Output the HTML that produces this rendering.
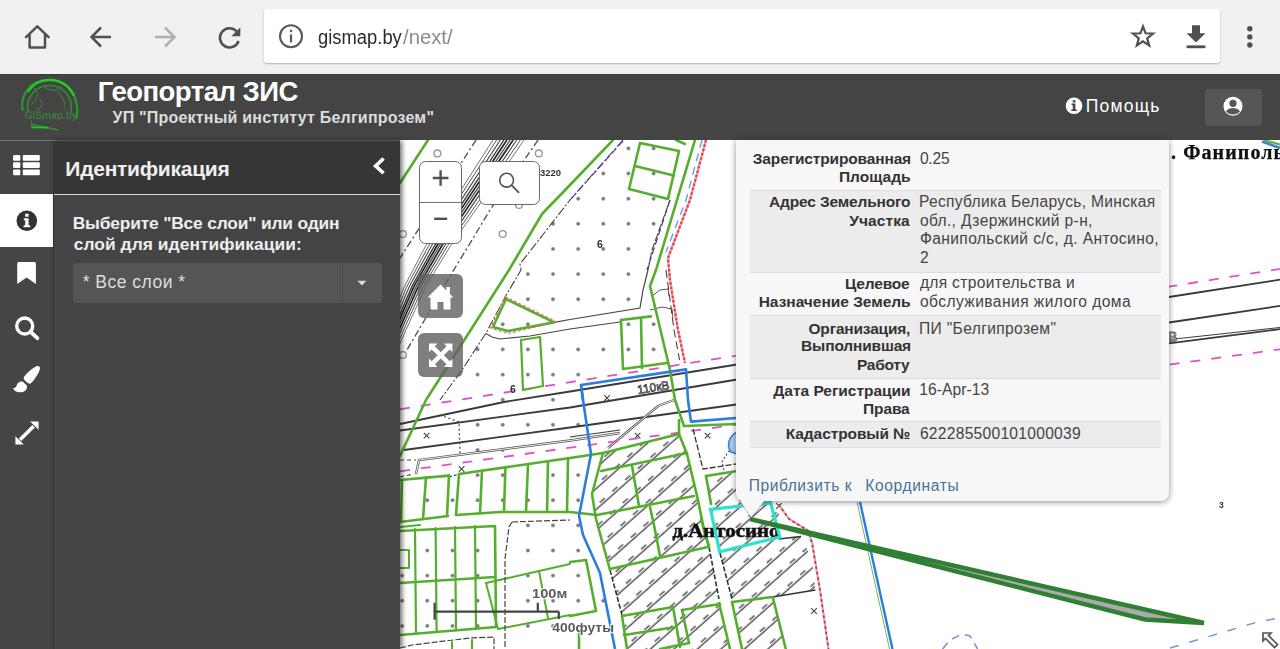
<!DOCTYPE html>
<html lang="ru">
<head>
<meta charset="utf-8">
<title>Геопортал ЗИС</title>
<style>
*{box-sizing:border-box;margin:0;padding:0}
html,body{width:1280px;height:649px;overflow:hidden;background:#fff;font-family:"Liberation Sans",sans-serif;}
div,svg{position:absolute}
#chrome{left:0;top:0;width:1280px;height:74px;background:#f1f1f1}
#omni{left:264px;top:9px;width:956px;height:53.6px;background:#fff;border-radius:3px;box-shadow:0 1px 2px rgba(0,0,0,.28)}
#url{left:317px;top:24px;font-size:20.5px;line-height:26px;color:#2a2a2a;white-space:nowrap;letter-spacing:-0.55px}
#url span{color:#8a8a8a}
#hdr{left:0;top:74px;width:1280px;height:67px;background:#444;border-top:1px solid #3a3a3a}
#hline{left:0;top:140px;width:400px;height:1px;background:#777}
#t1{left:98px;top:74.5px;font-size:27.5px;line-height:34px;font-weight:bold;color:#fff;white-space:nowrap;letter-spacing:-0.55px}
#t2{left:112px;top:109px;font-size:16px;line-height:18px;font-weight:bold;color:#ddd;white-space:nowrap;letter-spacing:.19px}
#help{left:1086px;top:95px;font-size:17.5px;line-height:22px;color:#fff;white-space:nowrap;letter-spacing:.8px}
#userbtn{left:1205px;top:89px;width:57px;height:37px;background:#565656;border-radius:3px}
#strip{left:0;top:141px;width:54px;height:508px;background:#454545;border-right:1px solid #3a3a3a}
#active{left:0;top:194px;width:53px;height:53px;background:#fff}
#panel{left:54px;top:141px;width:345.5px;height:508px;background:#444;box-shadow:2px 0 5px rgba(0,0,0,.6)}
#phead{left:54px;top:141px;width:345.5px;height:54px;background:#363636;border-bottom:1.5px solid #ddd}
#ptitle{left:67px;top:156px;font-size:21px;line-height:26px;font-weight:bold;color:#eee;white-space:nowrap;letter-spacing:-.4px}
#plabel{left:73px;top:214px;font-size:17.4px;line-height:20.8px;font-weight:bold;color:#eee;white-space:nowrap;letter-spacing:-.22px}
#psel{left:73px;top:263px;width:309px;height:40px;background:#555;border-radius:3px}
#pselsep{left:342px;top:263px;width:1px;height:40px;background:#4a4a4a}
#pseltxt{left:82px;top:271px;font-size:17.5px;line-height:22px;color:#ddd;white-space:nowrap;letter-spacing:.45px}
#map{left:400px;top:140px;width:880px;height:509px;background:#fff;overflow:hidden}
#popup{left:736.3px;top:140px;width:432.7px;height:361px;background:#f7f7f7;border-radius:0 0 8px 8px;box-shadow:0 1px 6px rgba(0,0,0,.45)}
.row{left:750px;width:411px;border-top:1px solid #ddd}
.row.g{background:#ececec}
.lab{right:251px;top:3px;text-align:right;font-weight:bold;font-size:16px;line-height:18.4px;color:#333;white-space:nowrap}
.val{left:170px;top:3px;font-size:16px;line-height:18.4px;color:#444;white-space:nowrap}
.lnk{font-size:16px;line-height:18.4px;color:#4a7295;white-space:nowrap}
.mbtn{background:#fff;border:1.8px solid #6a6a6a;border-radius:6.5px}
.gbtn{background:rgba(95,95,95,.8);border-radius:6px}
</style>
</head>
<body>
<div id="chrome"></div>
<div id="omni"></div>
<div id="hdr"></div>
<div id="userbtn"></div>
<div id="map">
<svg style="left:0;top:0;filter:blur(0.55px)" width="880" height="509" viewBox="400 140 880 509">
<defs>
<pattern id="hatch" width="17" height="15.6" patternUnits="userSpaceOnUse" patternTransform="translate(610 570) rotate(-41.6)"><line x1="0" y1="8" x2="17" y2="8" stroke="#444" stroke-width="1.35"/><line x1="3" y1="5.2" x2="9.800" y2="5.2" stroke="#555" stroke-width="1.5"/></pattern>
</defs>
<circle cx="628.4" cy="148.4" r="1.7" fill="#777" stroke="#999" stroke-width=".7"/>
<circle cx="653.6" cy="148.4" r="1.7" fill="#777" stroke="#999" stroke-width=".7"/>
<circle cx="603.3" cy="173.5" r="1.7" fill="#777" stroke="#999" stroke-width=".7"/>
<circle cx="628.4" cy="173.5" r="1.7" fill="#777" stroke="#999" stroke-width=".7"/>
<circle cx="653.6" cy="173.5" r="1.7" fill="#777" stroke="#999" stroke-width=".7"/>
<circle cx="578.2" cy="198.7" r="1.7" fill="#777" stroke="#999" stroke-width=".7"/>
<circle cx="603.3" cy="198.7" r="1.7" fill="#777" stroke="#999" stroke-width=".7"/>
<circle cx="628.4" cy="198.7" r="1.7" fill="#777" stroke="#999" stroke-width=".7"/>
<circle cx="653.6" cy="198.7" r="1.7" fill="#777" stroke="#999" stroke-width=".7"/>
<circle cx="553.0" cy="223.8" r="1.7" fill="#777" stroke="#999" stroke-width=".7"/>
<circle cx="578.2" cy="223.8" r="1.7" fill="#777" stroke="#999" stroke-width=".7"/>
<circle cx="603.3" cy="223.8" r="1.7" fill="#777" stroke="#999" stroke-width=".7"/>
<circle cx="628.4" cy="223.8" r="1.7" fill="#777" stroke="#999" stroke-width=".7"/>
<circle cx="653.6" cy="223.8" r="1.7" fill="#777" stroke="#999" stroke-width=".7"/>
<circle cx="553.0" cy="248.9" r="1.7" fill="#777" stroke="#999" stroke-width=".7"/>
<circle cx="578.2" cy="248.9" r="1.7" fill="#777" stroke="#999" stroke-width=".7"/>
<circle cx="603.3" cy="248.9" r="1.7" fill="#777" stroke="#999" stroke-width=".7"/>
<circle cx="628.4" cy="248.9" r="1.7" fill="#777" stroke="#999" stroke-width=".7"/>
<circle cx="527.9" cy="274.1" r="1.7" fill="#777" stroke="#999" stroke-width=".7"/>
<circle cx="553.0" cy="274.1" r="1.7" fill="#777" stroke="#999" stroke-width=".7"/>
<circle cx="578.2" cy="274.1" r="1.7" fill="#777" stroke="#999" stroke-width=".7"/>
<circle cx="603.3" cy="274.1" r="1.7" fill="#777" stroke="#999" stroke-width=".7"/>
<circle cx="628.4" cy="274.1" r="1.7" fill="#777" stroke="#999" stroke-width=".7"/>
<circle cx="527.9" cy="299.2" r="1.7" fill="#777" stroke="#999" stroke-width=".7"/>
<circle cx="553.0" cy="299.2" r="1.7" fill="#777" stroke="#999" stroke-width=".7"/>
<circle cx="578.2" cy="299.2" r="1.7" fill="#777" stroke="#999" stroke-width=".7"/>
<circle cx="603.3" cy="299.2" r="1.7" fill="#777" stroke="#999" stroke-width=".7"/>
<circle cx="628.4" cy="299.2" r="1.7" fill="#777" stroke="#999" stroke-width=".7"/>
<circle cx="502.7" cy="324.3" r="1.7" fill="#777" stroke="#999" stroke-width=".7"/>
<circle cx="527.9" cy="324.3" r="1.7" fill="#777" stroke="#999" stroke-width=".7"/>
<circle cx="628.4" cy="324.3" r="1.7" fill="#777" stroke="#999" stroke-width=".7"/>
<circle cx="653.6" cy="324.3" r="1.7" fill="#777" stroke="#999" stroke-width=".7"/>
<circle cx="477.6" cy="349.4" r="1.7" fill="#777" stroke="#999" stroke-width=".7"/>
<circle cx="502.7" cy="349.4" r="1.7" fill="#777" stroke="#999" stroke-width=".7"/>
<circle cx="527.9" cy="349.4" r="1.7" fill="#777" stroke="#999" stroke-width=".7"/>
<circle cx="553.0" cy="349.4" r="1.7" fill="#777" stroke="#999" stroke-width=".7"/>
<circle cx="578.2" cy="349.4" r="1.7" fill="#777" stroke="#999" stroke-width=".7"/>
<circle cx="603.3" cy="349.4" r="1.7" fill="#777" stroke="#999" stroke-width=".7"/>
<circle cx="628.4" cy="349.4" r="1.7" fill="#777" stroke="#999" stroke-width=".7"/>
<circle cx="653.6" cy="349.4" r="1.7" fill="#777" stroke="#999" stroke-width=".7"/>
<circle cx="477.6" cy="374.6" r="1.7" fill="#777" stroke="#999" stroke-width=".7"/>
<circle cx="502.7" cy="374.6" r="1.7" fill="#777" stroke="#999" stroke-width=".7"/>
<circle cx="527.9" cy="374.6" r="1.7" fill="#777" stroke="#999" stroke-width=".7"/>
<circle cx="553.0" cy="374.6" r="1.7" fill="#777" stroke="#999" stroke-width=".7"/>
<circle cx="578.2" cy="374.6" r="1.7" fill="#777" stroke="#999" stroke-width=".7"/>
<circle cx="502.7" cy="399.7" r="1.7" fill="#777" stroke="#999" stroke-width=".7"/>
<circle cx="553.0" cy="399.7" r="1.7" fill="#777" stroke="#999" stroke-width=".7"/>
<circle cx="477.6" cy="424.8" r="1.7" fill="#777" stroke="#999" stroke-width=".7"/>
<circle cx="502.7" cy="424.8" r="1.7" fill="#777" stroke="#999" stroke-width=".7"/>
<circle cx="527.9" cy="424.8" r="1.7" fill="#777" stroke="#999" stroke-width=".7"/>
<circle cx="553.0" cy="424.8" r="1.7" fill="#777" stroke="#999" stroke-width=".7"/>
<circle cx="578.2" cy="424.8" r="1.7" fill="#777" stroke="#999" stroke-width=".7"/>
<circle cx="477.6" cy="450.0" r="1.7" fill="#777" stroke="#999" stroke-width=".7"/>
<circle cx="502.7" cy="450.0" r="1.7" fill="#777" stroke="#999" stroke-width=".7"/>
<circle cx="477.6" cy="475.1" r="1.7" fill="#777" stroke="#999" stroke-width=".7"/>
<circle cx="502.7" cy="475.1" r="1.7" fill="#777" stroke="#999" stroke-width=".7"/>
<circle cx="553.0" cy="475.1" r="1.7" fill="#777" stroke="#999" stroke-width=".7"/>
<circle cx="578.2" cy="475.1" r="1.7" fill="#777" stroke="#999" stroke-width=".7"/>
<circle cx="427.3" cy="500.2" r="1.7" fill="#777" stroke="#999" stroke-width=".7"/>
<circle cx="452.5" cy="500.2" r="1.7" fill="#777" stroke="#999" stroke-width=".7"/>
<circle cx="477.6" cy="500.2" r="1.7" fill="#777" stroke="#999" stroke-width=".7"/>
<circle cx="502.7" cy="500.2" r="1.7" fill="#777" stroke="#999" stroke-width=".7"/>
<circle cx="527.9" cy="500.2" r="1.7" fill="#777" stroke="#999" stroke-width=".7"/>
<circle cx="553.0" cy="500.2" r="1.7" fill="#777" stroke="#999" stroke-width=".7"/>
<circle cx="578.2" cy="500.2" r="1.7" fill="#777" stroke="#999" stroke-width=".7"/>
<circle cx="527.9" cy="525.4" r="1.7" fill="#777" stroke="#999" stroke-width=".7"/>
<circle cx="553.0" cy="525.4" r="1.7" fill="#777" stroke="#999" stroke-width=".7"/>
<circle cx="578.2" cy="525.4" r="1.7" fill="#777" stroke="#999" stroke-width=".7"/>
<circle cx="427.3" cy="550.5" r="1.7" fill="#777" stroke="#999" stroke-width=".7"/>
<circle cx="452.5" cy="550.5" r="1.7" fill="#777" stroke="#999" stroke-width=".7"/>
<circle cx="477.6" cy="550.5" r="1.7" fill="#777" stroke="#999" stroke-width=".7"/>
<circle cx="527.9" cy="550.5" r="1.7" fill="#777" stroke="#999" stroke-width=".7"/>
<circle cx="553.0" cy="550.5" r="1.7" fill="#777" stroke="#999" stroke-width=".7"/>
<circle cx="578.2" cy="550.5" r="1.7" fill="#777" stroke="#999" stroke-width=".7"/>
<circle cx="402.2" cy="575.6" r="1.7" fill="#777" stroke="#999" stroke-width=".7"/>
<circle cx="427.3" cy="575.6" r="1.7" fill="#777" stroke="#999" stroke-width=".7"/>
<circle cx="452.5" cy="575.6" r="1.7" fill="#777" stroke="#999" stroke-width=".7"/>
<circle cx="477.6" cy="575.6" r="1.7" fill="#777" stroke="#999" stroke-width=".7"/>
<circle cx="527.9" cy="575.6" r="1.7" fill="#777" stroke="#999" stroke-width=".7"/>
<circle cx="553.0" cy="575.6" r="1.7" fill="#777" stroke="#999" stroke-width=".7"/>
<circle cx="578.2" cy="575.6" r="1.7" fill="#777" stroke="#999" stroke-width=".7"/>
<circle cx="402.2" cy="600.7" r="1.7" fill="#777" stroke="#999" stroke-width=".7"/>
<circle cx="427.3" cy="600.7" r="1.7" fill="#777" stroke="#999" stroke-width=".7"/>
<circle cx="452.5" cy="600.7" r="1.7" fill="#777" stroke="#999" stroke-width=".7"/>
<circle cx="477.6" cy="600.7" r="1.7" fill="#777" stroke="#999" stroke-width=".7"/>
<circle cx="527.9" cy="600.7" r="1.7" fill="#777" stroke="#999" stroke-width=".7"/>
<circle cx="553.0" cy="600.7" r="1.7" fill="#777" stroke="#999" stroke-width=".7"/>
<circle cx="578.2" cy="600.7" r="1.7" fill="#777" stroke="#999" stroke-width=".7"/>
<circle cx="603.3" cy="600.7" r="1.7" fill="#777" stroke="#999" stroke-width=".7"/>
<circle cx="402.2" cy="625.9" r="1.7" fill="#777" stroke="#999" stroke-width=".7"/>
<circle cx="427.3" cy="625.9" r="1.7" fill="#777" stroke="#999" stroke-width=".7"/>
<circle cx="452.5" cy="625.9" r="1.7" fill="#777" stroke="#999" stroke-width=".7"/>
<circle cx="477.6" cy="625.9" r="1.7" fill="#777" stroke="#999" stroke-width=".7"/>
<circle cx="527.9" cy="625.9" r="1.7" fill="#777" stroke="#999" stroke-width=".7"/>
<circle cx="553.0" cy="625.9" r="1.7" fill="#777" stroke="#999" stroke-width=".7"/>
<path d="M493.0 140.0 L453.5 201.6 L426.0 245.3 L404.5 286.2 L390.0 321.0 L370.0 366.0" fill="none" stroke="#666" stroke-width="0.9" />
<path d="M496.6 140.0 L456.7 201.6 L428.9 245.3 L407.0 286.2 L392.3 321.0 L372.3 366.0" fill="none" stroke="#555" stroke-width="1" />
<path d="M500.3 140.0 L460.1 201.6 L431.8 245.3 L409.5 286.2 L394.7 321.0 L374.7 366.0" fill="none" stroke="#444" stroke-width="1.1" />
<path d="M503.9 140.0 L463.3 201.6 L434.7 245.3 L412.0 286.2 L397.0 321.0 L377.0 366.0" fill="none" stroke="#333" stroke-width="1.3" />
<path d="M506.9 140.0 L466.1 201.6 L437.2 245.3 L414.1 286.2 L399.0 321.0 L379.0 366.0" fill="none" stroke="#222" stroke-width="1.7" />
<path d="M510.1 140.0 L468.9 201.6 L439.6 245.3 L416.3 286.2 L401.0 321.0 L381.0 366.0" fill="none" stroke="#444" stroke-width="1.2" />
<path d="M513.1 140.0 L471.7 201.6 L442.1 245.3 L418.4 286.2 L403.0 321.0 L383.0 366.0" fill="none" stroke="#222" stroke-width="1.7" />
<path d="M516.7 140.0 L474.9 201.6 L445.0 245.3 L420.9 286.2 L405.3 321.0 L385.3 366.0" fill="none" stroke="#444" stroke-width="1.1" />
<path d="M520.4 140.0 L478.3 201.6 L447.9 245.3 L423.4 286.2 L407.7 321.0 L387.7 366.0" fill="none" stroke="#555" stroke-width="1" />
<path d="M524.0 140.0 L481.5 201.6 L450.8 245.3 L425.9 286.2 L410.0 321.0 L390.0 366.0" fill="none" stroke="#666" stroke-width="0.9" />
<path d="M476.0 140.0 L440.0 196.0 L400.0 258.0" fill="none" stroke="#555" stroke-width="1.4" stroke-dasharray="7 3 2 3"/>
<path d="M538.0 140.0 L490.0 210.0 L469.0 245.0 L444.0 286.0 L424.0 321.0 L404.0 355.0" fill="none" stroke="#555" stroke-width="1.4" stroke-dasharray="7 3 2 3"/>
<circle cx="437.4" cy="153.4" r="3.4" fill="#fff" stroke="#999" stroke-width="1.4"/>
<circle cx="538.8" cy="153.4" r="3.4" fill="#fff" stroke="#999" stroke-width="1.4"/>
<circle cx="502.7" cy="234" r="3.4" fill="#fff" stroke="#999" stroke-width="1.4"/>
<circle cx="403" cy="234" r="3.4" fill="#fff" stroke="#999" stroke-width="1.4"/>
<circle cx="519" cy="205" r="3.4" fill="#fff" stroke="#999" stroke-width="1.4"/>
<circle cx="403" cy="355" r="3.4" fill="#fff" stroke="#999" stroke-width="1.4"/>
<text x="540" y="175.5" font-size="9.5" font-weight="bold" fill="#333" font-family="Liberation Sans">3220</text>
<path d="M623.0 140.0 L570.0 200.0 L545.0 232.0 L520.0 264.0 L521.0 270.0 L508.0 292.0 L486.0 333.0 L462.0 370.0 L440.0 400.0" fill="none" stroke="#444" stroke-width="1.1" stroke-dasharray="9 2 2 2"/>
<path d="M486.0 333.6 L492.0 337.0 L500.0 339.0 L530.0 336.0 L570.0 329.0 L620.0 322.0" fill="none" stroke="#444" stroke-width="1.1" />
<path d="M554.0 322.4 L570.0 319.5 L640.0 308.0 L643.0 290.0 L648.0 270.0" fill="none" stroke="#444" stroke-width="1.2" />
<path d="M648.0 270.0 L652.0 250.0 L670.0 200.0" fill="none" stroke="#444" stroke-width="1.1" stroke-dasharray="8 2"/>
<path d="M652.0 296.0 L660.0 290.0 L668.0 289.0 L669.0 296.0" fill="none" stroke="#555" stroke-width="1" />
<path d="M650.0 310.0 L662.0 307.0 L672.0 309.0 L673.0 318.0" fill="none" stroke="#555" stroke-width="1" />
<path d="M400.0 424.0 L504.0 402.0 L570.0 391.5 L740.0 364.0" fill="none" stroke="#3a3a3a" stroke-width="1.8" />
<path d="M400.0 430.5 L570.0 407.5 L740.0 379.0" fill="none" stroke="#3a3a3a" stroke-width="1.8" />
<path d="M404.0 450.0 L570.0 427.5 L682.0 412.0 L740.0 404.0" fill="none" stroke="#3a3a3a" stroke-width="1.8" />
<path d="M416.0 474.0 L419.0 460.0 L570.0 440.5 L620.0 433.0" fill="none" stroke="#555" stroke-width="2.4" />
<path d="M416.0 474.0 L419.0 460.0 L570.0 440.5 L620.0 433.0" fill="none" stroke="#fff" stroke-width="0.9" />
<path d="M608.0 448.0 L658.0 406.0 L674.0 400.0" fill="none" stroke="#555" stroke-width="2.4" />
<path d="M608.0 448.0 L658.0 406.0 L674.0 400.0" fill="none" stroke="#fff" stroke-width="0.9" />
<path d="M570.0 437.0 L620.0 430.0" fill="none" stroke="#3a3a3a" stroke-width="1.2" />
<path d="M1169.0 297.0 L1280.0 279.7" fill="none" stroke="#3a3a3a" stroke-width="1.8" />
<path d="M1169.0 322.5 L1280.0 305.9" fill="none" stroke="#3a3a3a" stroke-width="1.8" />
<path d="M1169.0 343.3 L1280.0 329.2" fill="none" stroke="#3a3a3a" stroke-width="1.8" />
<path d="M1169.0 339.6 L1280.0 327.5" fill="none" stroke="#3a3a3a" stroke-width="1.0" />
<path d="M440.0 415.0 L459.0 422.0 L460.0 454.0" fill="none" stroke="#444" stroke-width="1.2" stroke-dasharray="2 2.500"/>
<path d="M400.0 460.0 L416.0 460.0" fill="none" stroke="#444" stroke-width="1.2" stroke-dasharray="4 3"/>
<path d="M400.0 477.0 L414.0 474.0" fill="none" stroke="#444" stroke-width="1.2" stroke-dasharray="4 3"/>
<path d="M449.0 477.0 L459.0 474.0" fill="none" stroke="#444" stroke-width="1.2" stroke-dasharray="3 2"/>
<path d="M423.8 432.8 L429.40000000000003 438.40000000000003 M423.8 438.40000000000003 L429.40000000000003 432.8" stroke="#444" stroke-width="1.1" fill="none"/>
<path d="M458.8 466.2 L464.40000000000003 471.8 M458.8 471.8 L464.40000000000003 466.2" stroke="#444" stroke-width="1.1" fill="none"/>
<path d="M634.8000000000001 432.8 L640.4 438.40000000000003 M634.8000000000001 438.40000000000003 L640.4 432.8" stroke="#444" stroke-width="1.1" fill="none"/>
<path d="M704.8000000000001 432.8 L710.4 438.40000000000003 M704.8000000000001 438.40000000000003 L710.4 432.8" stroke="#444" stroke-width="1.1" fill="none"/>
<path d="M811.2 608.2 L816.8 613.8 M811.2 613.8 L816.8 608.2" stroke="#444" stroke-width="1.1" fill="none"/>
<path d="M604.2 395.2 L609.8 400.8 M604.2 400.8 L609.8 395.2" stroke="#444" stroke-width="1.1" fill="none"/>
<path d="M776.2 503.2 L781.8 508.8 M776.2 508.8 L781.8 503.2" stroke="#444" stroke-width="1.1" fill="none"/>
<path d="M400.0 409.3 L1280.0 268.9" fill="none" stroke="#e050c8" stroke-width="1.8" stroke-dasharray="10 11"/>
<path d="M400.0 471.3 L1280.0 349.3" fill="none" stroke="#e050c8" stroke-width="1.8" stroke-dasharray="10 11"/>
<path d="M603 453 L679 434 L687 454 L698 500 L701 519 L709 547 L719 599 L730 649 L627 649 L622 615 L610 570 L596 519 L592 494 Z" fill="url(#hatch)"/>
<path d="M706 476 L740 470.5 L779 500 L778.6 539 L801 536.5 L812 560 L815.4 590 L772.7 597 L785.8 649 L742 649 L732 602 L720 553 L711 519 L711 504 Z" fill="url(#hatch)"/>
<path d="M610.0 570.0 L622.0 615.0" fill="none" stroke="#333" stroke-width="1.6" stroke-dasharray="5 2"/>
<path d="M709.0 547.0 L719.0 599.0" fill="none" stroke="#333" stroke-width="1.6" stroke-dasharray="5 2"/>
<path d="M720.0 553.0 L732.0 599.0" fill="none" stroke="#333" stroke-width="1.6" stroke-dasharray="5 2"/>
<path d="M778.6 539.0 L801.0 536.5" fill="none" stroke="#333" stroke-width="1.3" />
<path d="M772.7 597.0 L815.4 590.0" fill="none" stroke="#333" stroke-width="1.3" />
<path d="M693.0 429.0 L703.0 469.0 L736.0 464.0" fill="none" stroke="#333" stroke-width="1.3" stroke-dasharray="6 2"/>
<path d="M724.0 470.0 L722.0 462.0 L728.0 452.0 L735.0 447.0" fill="none" stroke="#444" stroke-width="1.1" stroke-dasharray="2 2"/>
<path d="M737 432 C729 436 726 446 731 452 L737 454 Z" fill="#a8d0f0" stroke="#3b82d6" stroke-width="1.6"/>
<path d="M706.0 140.0 L690.0 200.0 L668.0 258.0 L670.0 280.0 L678.0 330.0 L685.0 363.0" fill="none" stroke="#f0a0a8" stroke-width="2.4" />
<path d="M706.0 140.0 L690.0 200.0 L668.0 258.0 L670.0 280.0 L678.0 330.0 L685.0 363.0" fill="none" stroke="#e8404a" stroke-width="2.2" stroke-dasharray="2.500 2"/>
<path d="M702.0 140.0 L686.0 200.0 L666.0 252.0" fill="none" stroke="#6aa0dc" stroke-width="1.4" stroke-dasharray="8 6"/>
<path d="M666.0 270.0 L674.0 330.0 L679.6 360.0" fill="none" stroke="#444" stroke-width="1.1" stroke-dasharray="8 4"/>
<path d="M778.6 504.5 L789.0 519.0 L808.0 530.6 L812.0 542.5 L820.0 590.0 L828.5 649.0" fill="none" stroke="#f0a0a8" stroke-width="2.2" />
<path d="M778.6 504.5 L789.0 519.0 L808.0 530.6 L812.0 542.5 L820.0 590.0 L828.5 649.0" fill="none" stroke="#b03040" stroke-width="1.6" stroke-dasharray="2.500 3"/>
<path d="M428.0 140.0 L400.0 183.0" fill="none" stroke="#55ae2c" stroke-width="2.6" stroke-linejoin="round" stroke-linecap="round"/>
<path d="M613.0 140.0 L570.0 185.0 L542.0 214.0 L509.0 270.0 L426.0 400.0 L400.0 456.0" fill="none" stroke="#55ae2c" stroke-width="2.6" stroke-linejoin="round" stroke-linecap="round"/>
<path d="M623.0 141.0 L570.0 200.0" fill="none" stroke="#5a4a8a" stroke-width="1.2" stroke-dasharray="7 3"/>
<path d="M695.0 140.0 L656.0 270.0 L650.0 286.0 L670.0 370.0 L675.0 400.0 L684.0 426.0 L736.0 424.0" fill="none" stroke="#55ae2c" stroke-width="2.6" stroke-linejoin="round" stroke-linecap="round"/>
<path d="M670.0 200.0 L647.0 270.0" fill="none" stroke="#4a3a7a" stroke-width="1.2" stroke-dasharray="7 3"/>
<path d="M679.0 420.0 L679.0 434.0 L687.0 454.0 L698.0 500.0 L704.0 530.0 L709.0 547.0" fill="none" stroke="#55ae2c" stroke-width="2.6" stroke-linejoin="round" stroke-linecap="round"/>
<path d="M640.0 143.0 L679.0 151.0 L668.0 199.0 L629.0 189.0 Z" fill="none" stroke="#55ae2c" stroke-width="2.6" stroke-linejoin="round" stroke-linecap="round"/>
<path d="M635.0 166.0 L673.6 175.6" fill="none" stroke="#55ae2c" stroke-width="2.6" stroke-linejoin="round" stroke-linecap="round"/>
<path d="M676.0 140.0 L685.0 144.0" fill="none" stroke="#55ae2c" stroke-width="2.6" stroke-linejoin="round" stroke-linecap="round"/>
<path d="M506.0 299.0 L554.0 322.4 L508.0 331.0 L493.0 327.0 Z" fill="none" stroke="#55ae2c" stroke-width="2.6" stroke-linejoin="round" stroke-linecap="round"/>
<path d="M505.0 296.5 L557.0 322.0 L508.0 333.5 L490.5 328.0 Z" fill="none" stroke="#e8707a" stroke-width="1.2" stroke-dasharray="3 2"/>
<path d="M521.0 340.0 L540.0 337.0 L543.0 386.0 L523.0 390.0 Z" fill="none" stroke="#55ae2c" stroke-width="2.2" stroke-linejoin="round" stroke-linecap="round"/>
<path d="M621.0 320.0 L651.0 316.4" fill="none" stroke="#55ae2c" stroke-width="2.6" stroke-linejoin="round" stroke-linecap="round"/>
<path d="M621.0 320.0 L623.0 369.0 L667.0 363.0" fill="none" stroke="#55ae2c" stroke-width="2.6" stroke-linejoin="round" stroke-linecap="round"/>
<path d="M641.0 318.0 L642.0 368.0" fill="none" stroke="#55ae2c" stroke-width="2.6" stroke-linejoin="round" stroke-linecap="round"/>
<path d="M459.0 474.0 L570.0 458.0 L603.0 453.0 L679.0 434.0" fill="none" stroke="#55ae2c" stroke-width="2.6" stroke-linejoin="round" stroke-linecap="round"/>
<path d="M456.0 515.0 L500.0 512.0 L570.0 512.0 L597.0 515.0 L694.0 496.0" fill="none" stroke="#55ae2c" stroke-width="2.6" stroke-linejoin="round" stroke-linecap="round"/>
<path d="M459.0 474.0 L456.0 515.0" fill="none" stroke="#55ae2c" stroke-width="2.6" stroke-linejoin="round" stroke-linecap="round"/>
<path d="M482.0 471.0 L480.0 513.0" fill="none" stroke="#55ae2c" stroke-width="2.6" stroke-linejoin="round" stroke-linecap="round"/>
<path d="M505.4 467.6 L504.0 512.0" fill="none" stroke="#55ae2c" stroke-width="2.6" stroke-linejoin="round" stroke-linecap="round"/>
<path d="M528.0 464.3 L526.0 512.0" fill="none" stroke="#55ae2c" stroke-width="2.6" stroke-linejoin="round" stroke-linecap="round"/>
<path d="M548.0 461.4 L547.0 512.0" fill="none" stroke="#55ae2c" stroke-width="2.6" stroke-linejoin="round" stroke-linecap="round"/>
<path d="M568.0 458.3 L567.0 512.0" fill="none" stroke="#55ae2c" stroke-width="2.6" stroke-linejoin="round" stroke-linecap="round"/>
<path d="M400.0 480.0 L449.0 475.6" fill="none" stroke="#55ae2c" stroke-width="2.6" stroke-linejoin="round" stroke-linecap="round"/>
<path d="M400.0 522.0 L448.0 516.0" fill="none" stroke="#55ae2c" stroke-width="2.6" stroke-linejoin="round" stroke-linecap="round"/>
<path d="M402.0 480.0 L401.0 522.0" fill="none" stroke="#55ae2c" stroke-width="2.6" stroke-linejoin="round" stroke-linecap="round"/>
<path d="M426.0 477.6 L423.0 519.0" fill="none" stroke="#55ae2c" stroke-width="2.6" stroke-linejoin="round" stroke-linecap="round"/>
<path d="M449.0 475.6 L447.0 516.0" fill="none" stroke="#55ae2c" stroke-width="2.6" stroke-linejoin="round" stroke-linecap="round"/>
<path d="M603.0 453.0 L592.0 494.0 L596.0 519.0 L610.0 570.0" fill="none" stroke="#55ae2c" stroke-width="2.6" stroke-linejoin="round" stroke-linecap="round"/>
<path d="M601.0 471.0 L687.0 453.0" fill="none" stroke="#55ae2c" stroke-width="2.6" stroke-linejoin="round" stroke-linecap="round"/>
<path d="M632.0 466.0 L639.0 506.0" fill="none" stroke="#55ae2c" stroke-width="2.6" stroke-linejoin="round" stroke-linecap="round"/>
<path d="M650.0 507.0 L655.0 530.0 L660.0 556.0" fill="none" stroke="#55ae2c" stroke-width="2.6" stroke-linejoin="round" stroke-linecap="round"/>
<path d="M610.0 569.0 L708.0 547.0" fill="none" stroke="#55ae2c" stroke-width="2.6" stroke-linejoin="round" stroke-linecap="round"/>
<path d="M701.0 519.0 L709.0 547.0" fill="none" stroke="#55ae2c" stroke-width="2.6" stroke-linejoin="round" stroke-linecap="round"/>
<path d="M622.0 616.0 L627.0 649.0" fill="none" stroke="#55ae2c" stroke-width="2.6" stroke-linejoin="round" stroke-linecap="round"/>
<path d="M622.0 616.0 L673.0 607.0 L680.0 647.0" fill="none" stroke="#55ae2c" stroke-width="2.6" stroke-linejoin="round" stroke-linecap="round"/>
<path d="M624.0 635.0 L676.0 627.0" fill="none" stroke="#55ae2c" stroke-width="2.6" stroke-linejoin="round" stroke-linecap="round"/>
<path d="M682.0 610.0 L720.0 604.0" fill="none" stroke="#55ae2c" stroke-width="2.6" stroke-linejoin="round" stroke-linecap="round"/>
<path d="M682.0 610.0 L689.0 643.0" fill="none" stroke="#55ae2c" stroke-width="2.6" stroke-linejoin="round" stroke-linecap="round"/>
<path d="M660.0 649.0 L689.0 643.0" fill="none" stroke="#55ae2c" stroke-width="2.6" stroke-linejoin="round" stroke-linecap="round"/>
<path d="M719.0 603.0 L730.0 649.0" fill="none" stroke="#55ae2c" stroke-width="2.6" stroke-linejoin="round" stroke-linecap="round"/>
<path d="M706.0 476.0 L740.0 470.5" fill="none" stroke="#55ae2c" stroke-width="2.6" stroke-linejoin="round" stroke-linecap="round"/>
<path d="M706.0 476.0 L711.0 504.0" fill="none" stroke="#55ae2c" stroke-width="2.6" stroke-linejoin="round" stroke-linecap="round"/>
<path d="M732.0 602.0 L772.7 597.0 L785.8 649.0" fill="none" stroke="#55ae2c" stroke-width="2.6" stroke-linejoin="round" stroke-linecap="round"/>
<path d="M732.0 602.0 L742.0 649.0" fill="none" stroke="#55ae2c" stroke-width="2.6" stroke-linejoin="round" stroke-linecap="round"/>
<path d="M400.0 531.0 L495.0 526.0 L496.0 627.0 L400.0 635.0" fill="none" stroke="#55ae2c" stroke-width="2.6" stroke-linejoin="round" stroke-linecap="round"/>
<path d="M400.0 583.0 L495.0 577.0" fill="none" stroke="#55ae2c" stroke-width="2.6" stroke-linejoin="round" stroke-linecap="round"/>
<path d="M415.0 529.2 L416.0 633.8" fill="none" stroke="#55ae2c" stroke-width="2.2" stroke-linejoin="round" stroke-linecap="round"/>
<path d="M435.6 528.2 L436.6 632.0" fill="none" stroke="#55ae2c" stroke-width="2.2" stroke-linejoin="round" stroke-linecap="round"/>
<path d="M455.0 527.2 L456.0 630.4" fill="none" stroke="#55ae2c" stroke-width="2.2" stroke-linejoin="round" stroke-linecap="round"/>
<path d="M475.0 526.2 L476.0 628.8" fill="none" stroke="#55ae2c" stroke-width="2.2" stroke-linejoin="round" stroke-linecap="round"/>
<path d="M400.0 550.0 L409.0 550.0 L409.0 568.0 L400.0 568.0" fill="none" stroke="#55ae2c" stroke-width="2" stroke-linejoin="round" stroke-linecap="round"/>
<path d="M486.0 583.0 L570.0 564.0" fill="none" stroke="#55ae2c" stroke-width="2" stroke-linejoin="round" stroke-linecap="round"/>
<path d="M486.0 583.0 L498.0 629.0 L570.0 615.0" fill="none" stroke="#55ae2c" stroke-width="2" stroke-linejoin="round" stroke-linecap="round"/>
<path d="M539.0 571.0 L548.0 618.0" fill="none" stroke="#55ae2c" stroke-width="2" stroke-linejoin="round" stroke-linecap="round"/>
<path d="M570.0 562.0 L586.0 560.0 L596.0 611.0 L570.0 616.0" fill="none" stroke="#55ae2c" stroke-width="2.6" stroke-linejoin="round" stroke-linecap="round"/>
<path d="M579.0 633.0 L579.0 649.0" fill="none" stroke="#55ae2c" stroke-width="2.6" stroke-linejoin="round" stroke-linecap="round"/>
<path d="M452.0 642.0 L452.0 649.0" fill="none" stroke="#55ae2c" stroke-width="2" stroke-linejoin="round" stroke-linecap="round"/>
<path d="M472.0 640.0 L472.0 649.0" fill="none" stroke="#55ae2c" stroke-width="2" stroke-linejoin="round" stroke-linecap="round"/>
<path d="M400.0 527.0 L420.0 525.0" fill="none" stroke="#55ae2c" stroke-width="2" stroke-linejoin="round" stroke-linecap="round"/>
<path d="M512.0 522.0 L570.0 520.0" fill="none" stroke="#444" stroke-width="1.2" stroke-dasharray="6 2"/>
<path d="M512.0 522.0 L509.0 527.0 L505.0 559.0 L505.0 649.0" fill="none" stroke="#444" stroke-width="1.2" stroke-dasharray="6 2"/>
<path d="M400.0 648.0 L412.0 645.0 L470.0 638.0 L494.0 637.0 L494.0 649.0" fill="none" stroke="#444" stroke-width="1.2" stroke-dasharray="6 2"/>
<path d="M583.0 400.0 L581.0 385.0 L686.0 369.4 L688.0 400.0 L691.0 421.6 L736.0 418.0" fill="none" stroke="#2b7de0" stroke-width="2.6" stroke-linejoin="round"/>
<path d="M581.0 385.0 L583.0 400.0 L591.0 454.0 L579.0 516.0 L583.0 535.0 L600.0 573.0 L615.0 649.0" fill="none" stroke="#2b7de0" stroke-width="2.6" stroke-linejoin="round"/>
<path d="M860.0 502.0 L892.5 649.0" fill="none" stroke="#2b7de0" stroke-width="2.4" />
<path d="M857.0 502.0 L889.5 649.0" fill="none" stroke="#7ab648" stroke-width="1" />
<path d="M1170.0 648.0 L1257.5 622.0 L1280.0 617.8" fill="none" stroke="#7896d2" stroke-width="1.5" stroke-dasharray="9 11"/>
<path d="M942.5 649.0 L950.0 640.0 L962.0 634.0 L970.0 636.0 L977.6 649.0" fill="none" stroke="#7896d2" stroke-width="1.6" stroke-dasharray="8 6"/>
<path d="M1262.0 141.5 L1280.0 148.0" fill="none" stroke="#3b82d6" stroke-width="2.8" />
<path d="M1264.0 140.0 L1280.0 144.5" fill="none" stroke="#58b32e" stroke-width="2" />
<text x="597" y="248" font-size="10.5" font-weight="bold" fill="#333" font-family="Liberation Sans">6</text>
<text x="510" y="393" font-size="10.5" font-weight="bold" fill="#333" font-family="Liberation Sans">6</text>
<text x="1219" y="507.5" font-size="8.5" font-weight="bold" fill="#333" font-family="Liberation Sans">3</text>
<text transform="translate(638 394) rotate(-9)" font-size="12" fill="#fff" stroke="#444" stroke-width=".8" font-family="Liberation Sans">110кВ</text>
<text x="1168" y="341.500" font-size="14" fill="#fff" stroke="#555" stroke-width=".8" font-family="Liberation Sans">В</text>
<text x="1171" y="159.300" font-size="20" font-weight="bold" fill="#111" stroke="#111" stroke-width=".25" font-family="Liberation Serif" letter-spacing="1.1">. Фанипольский</text>
<text x="672.500" y="536.800" font-size="18.500" font-weight="bold" fill="#111" stroke="#111" stroke-width=".5" font-family="Liberation Serif" textLength="107" lengthAdjust="spacingAndGlyphs">д.Антосино</text>
<path d="M710.5 509.3 L770.6 502.8 L779.8 537.0 L719.7 551.8 Z" fill="none" stroke="#2fe0d0" stroke-width="3.2" stroke-linejoin="miter"/>
<path d="M750 519 L1204 623 L1145 619.5 Z" fill="#aaa" stroke="#2f8034" stroke-width="4.4" stroke-linejoin="miter"/>
<path d="M434.6 602.7 V619.8 M434.4 611.7 H559.2 M537.8 602.7 V611.7 M558.8 611.7 V619" fill="none" stroke="#444" stroke-width="2.2"/>
<text x="532" y="598" font-size="13.2" font-weight="bold" fill="#5a5a5a" stroke="#fff" stroke-width="2.5" stroke-opacity=".75" paint-order="stroke" textLength="35.2" lengthAdjust="spacingAndGlyphs" font-family="Liberation Sans">100м</text>
<text x="552.3" y="631.6" font-size="13.2" font-weight="bold" fill="#5a5a5a" stroke="#fff" stroke-width="2.5" stroke-opacity=".75" paint-order="stroke" textLength="61.7" lengthAdjust="spacingAndGlyphs" font-family="Liberation Sans">400футы</text>
<path d="M1263 633 H1271 L1268.500 635.5 L1277.500 644.5 L1274.500 647.5 L1265.500 638.5 L1263 641 Z" fill="#fff" stroke="#555" stroke-width="1.7"/>
</svg>

</div>
<div id="hline"></div>
<div id="strip"></div>
<div id="active"></div>
<div id="panel"></div>
<div id="phead"></div>
<div id="psel"></div>
<div id="pselsep"></div>
<div class="mbtn" style="left:419.3px;top:160.6px;width:42.8px;height:83.2px"></div>
<div style="left:420px;top:201.600px;width:41.500px;height:1.500px;background:#707070"></div>
<div class="mbtn" style="left:479.400px;top:161.400px;width:60.400px;height:43.600px"></div>
<div class="gbtn" style="left:418.400px;top:274.400px;width:44.5px;height:44px"></div>
<div class="gbtn" style="left:418.400px;top:333px;width:44.5px;height:44px"></div>
<svg style="left:0;top:0" width="1280" height="649" viewBox="0 0 1280 649">
<path d="M432.800 178 H448.400 M440.600 170.200 V185.800" stroke="#505050" stroke-width="2.400" fill="none"/>
<path d="M434.200 218.800 H447.200" stroke="#505050" stroke-width="2.400" fill="none"/>
<circle cx="506.600" cy="180.200" r="6.900" fill="none" stroke="#555" stroke-width="1.600"/>
<path d="M511.600 185.200 L519 192.800" stroke="#555" stroke-width="1.900"/>
<!-- home icon -->
<path d="M440.500 284.400 L446.500 290.400 V287 H450 V293.900 L453.500 297.400 H450.500 V309.600 H443.500 V302 H437.500 V309.600 H430.500 V297.400 H427.500 Z" fill="#fff"/>
<!-- fullscreen arrows -->
<g fill="#fff">
<path d="M429 343.600 H437.500 L434.800 346.300 L440.700 352.200 L446.600 346.300 L443.900 343.600 H452.400 V352.100 L449.700 349.400 L443.800 355.300 L449.700 361.200 L452.400 358.500 V367 H443.900 L446.600 364.300 L440.700 358.400 L434.800 364.300 L437.500 367 H429 V358.500 L431.700 361.200 L437.600 355.300 L431.700 349.400 L429 352.100 Z"/>
</g>
</svg>

<svg style="left:730px;top:495px" width="60" height="30" viewBox="730 495 60 30"><path d="M739 500 L751 517.500 L766 500 Z" fill="#f7f7f7" stroke="rgba(0,0,0,.25)" stroke-width="1"/></svg>
<div id="popup"></div>
<svg id="poptip" style="left:730px;top:495px" width="60" height="30" viewBox="730 495 60 30"><path d="M740 499 L751 516.500 L765 499 Z" fill="#f7f7f7"/></svg>
<div class="row" style="top:145px;height:45px;border-top:none"></div>
<div class="row g" style="top:190px;height:82px"></div>
<div class="row" style="top:271.5px;height:44px"></div>
<div class="row g" style="top:315px;height:64px"></div>
<div class="row" style="top:378.3px;height:43px"></div>
<div class="row g" style="top:420.7px;height:27.5px;border-bottom:1px solid #ddd"></div>

<div style="left:97.75px;top:74.87px;font-size:27.5px;line-height:33.0px;letter-spacing:-0.529px;font-weight:bold;color:#fff;white-space:pre">Геопортал ЗИС</div>
<div style="left:112.50px;top:107.61px;font-size:16px;line-height:19.2px;letter-spacing:0.206px;font-weight:bold;color:#ddd;white-space:pre">УП &quot;Проектный институт Белгипрозем&quot;</div>
<div style="left:1085.80px;top:96.04px;font-size:17.5px;line-height:21.0px;letter-spacing:1.205px;font-weight:normal;color:#fff;white-space:pre">Помощь</div>
<div style="left:317.60px;top:25.07px;font-size:20px;line-height:24.0px;transform:scaleX(0.9193);transform-origin:0 0;font-weight:normal;color:#2a2a2a;white-space:pre">gismap.by</div>
<div style="left:403.20px;top:25.07px;font-size:20px;line-height:24.0px;transform:scaleX(1.0130);transform-origin:0 0;font-weight:normal;color:#8a8a8a;white-space:pre">/next/</div>
<div style="left:65.30px;top:156.02px;font-size:21px;line-height:25.2px;letter-spacing:-0.256px;font-weight:bold;color:#eee;white-space:pre">Идентификация</div>
<div style="left:72.70px;top:213.23px;font-size:17.4px;line-height:20.88px;letter-spacing:-0.189px;font-weight:bold;color:#eee;white-space:pre">Выберите &quot;Все слои&quot; или один</div>
<div style="left:73.70px;top:234.03px;font-size:17.4px;line-height:20.88px;letter-spacing:0.051px;font-weight:bold;color:#eee;white-space:pre">слой для идентификации:</div>
<div style="left:82.70px;top:271.64px;font-size:17.5px;line-height:21.0px;letter-spacing:0.489px;font-weight:normal;color:#ddd;white-space:pre">* Все слои *</div>
<div style="left:752.80px;top:150.03px;font-size:15.5px;line-height:18.6px;letter-spacing:-0.149px;font-weight:bold;color:#333;white-space:pre">Зарегистрированная</div>
<div style="left:838.90px;top:168.43px;font-size:15.5px;line-height:18.6px;letter-spacing:0.037px;font-weight:bold;color:#333;white-space:pre">Площадь</div>
<div style="left:769.10px;top:193.13px;font-size:15.5px;line-height:18.6px;letter-spacing:-0.167px;font-weight:bold;color:#333;white-space:pre">Адрес Земельного</div>
<div style="left:849.20px;top:212.13px;font-size:15.5px;line-height:18.6px;letter-spacing:0.112px;font-weight:bold;color:#333;white-space:pre">Участка</div>
<div style="left:845.00px;top:274.53px;font-size:15.5px;line-height:18.6px;letter-spacing:-0.181px;font-weight:bold;color:#333;white-space:pre">Целевое</div>
<div style="left:758.70px;top:293.13px;font-size:15.5px;line-height:18.6px;letter-spacing:-0.025px;font-weight:bold;color:#333;white-space:pre">Назначение Земель</div>
<div style="left:808.50px;top:319.73px;font-size:15.5px;line-height:18.6px;letter-spacing:-0.192px;font-weight:bold;color:#333;white-space:pre">Организация,</div>
<div style="left:801.10px;top:337.43px;font-size:15.5px;line-height:18.6px;letter-spacing:-0.168px;font-weight:bold;color:#333;white-space:pre">Выполнившая</div>
<div style="left:856.90px;top:355.93px;font-size:15.5px;line-height:18.6px;letter-spacing:-0.237px;font-weight:bold;color:#333;white-space:pre">Работу</div>
<div style="left:773.30px;top:381.83px;font-size:15.5px;line-height:18.6px;letter-spacing:-0.020px;font-weight:bold;color:#333;white-space:pre">Дата Регистрации</div>
<div style="left:863.00px;top:399.83px;font-size:15.5px;line-height:18.6px;letter-spacing:-0.113px;font-weight:bold;color:#333;white-space:pre">Права</div>
<div style="left:785.80px;top:425.23px;font-size:15.5px;line-height:18.6px;letter-spacing:-0.098px;font-weight:bold;color:#333;white-space:pre">Кадастровый №</div>
<div style="left:919.90px;top:149.83px;font-size:15.6px;line-height:18.72px;letter-spacing:-0.226px;font-weight:normal;color:#444;white-space:pre">0.25</div>
<div style="left:918.90px;top:193.03px;font-size:15.6px;line-height:18.72px;letter-spacing:0.303px;font-weight:normal;color:#444;white-space:pre">Республика Беларусь, Минская</div>
<div style="left:919.90px;top:211.93px;font-size:15.6px;line-height:18.72px;letter-spacing:0.343px;font-weight:normal;color:#444;white-space:pre">обл., Дзержинский р-н,</div>
<div style="left:919.90px;top:230.43px;font-size:15.6px;line-height:18.72px;letter-spacing:0.389px;font-weight:normal;color:#444;white-space:pre">Фанипольский с/с, д. Антосино,</div>
<div style="left:919.90px;top:248.93px;font-size:15.6px;line-height:18.72px;letter-spacing:0.000px;font-weight:normal;color:#444;white-space:pre">2</div>
<div style="left:919.90px;top:274.33px;font-size:15.6px;line-height:18.72px;letter-spacing:0.313px;font-weight:normal;color:#444;white-space:pre">для строительства и</div>
<div style="left:919.90px;top:292.93px;font-size:15.6px;line-height:18.72px;letter-spacing:0.428px;font-weight:normal;color:#444;white-space:pre">обслуживания жилого дома</div>
<div style="left:918.90px;top:319.63px;font-size:15.6px;line-height:18.72px;letter-spacing:0.357px;font-weight:normal;color:#444;white-space:pre">ПИ &quot;Белгипрозем&quot;</div>
<div style="left:919.30px;top:380.73px;font-size:15.6px;line-height:18.72px;letter-spacing:0.054px;font-weight:normal;color:#444;white-space:pre">16-Apr-13</div>
<div style="left:919.90px;top:424.83px;font-size:15.6px;line-height:18.72px;letter-spacing:0.275px;font-weight:normal;color:#444;white-space:pre">622285500101000039</div>
<div style="left:748.80px;top:476.63px;font-size:15.6px;line-height:18.72px;letter-spacing:0.528px;font-weight:normal;color:#4a7295;white-space:pre">Приблизить к</div>
<div style="left:865.30px;top:476.63px;font-size:15.6px;line-height:18.72px;letter-spacing:0.607px;font-weight:normal;color:#4a7295;white-space:pre">Координаты</div>

<svg id="icons" style="left:0;top:0" width="1280" height="649" viewBox="0 0 1280 649">
<!-- logo -->
<g fill="none" stroke-linecap="round">
<path d="M22.600 110 C19.500 92 33 79.800 49.600 79.800 C66.500 79.800 80 95 76.800 118" stroke="#22a822" stroke-width="2.200" opacity=".85"/>
<path d="M28.500 91 C33 84 41 79.800 49.600 79.800 C60 79.800 69 85.500 73.500 95" stroke="#1fd01f" stroke-width="2.300"/>
<path d="M28 112 C25.500 97 36 85.500 49.600 85.500 C63.500 85.500 73.500 97 71 113" stroke="#2f9a2f" stroke-width="1.600" opacity=".8"/>
<path d="M34 88 C40 92 38 98 32 104 M44 86 C50 93 60 90 62 86 M58 92 C64 98 66 104 64 110 M40 100 C44 104 42 108 36 110" stroke="#3c8a3c" stroke-width="1.200" opacity=".7"/>
<path d="M31.800 124.300 C40 126.500 50 128 57.800 130" stroke="#2f9a2f" stroke-width="1.600" opacity=".8"/>
<path d="M32.400 127.400 L47.600 127.600" stroke="#20c820" stroke-width="1.800"/>
<path d="M31.600 121.500 V127" stroke="#2f9a2f" stroke-width="1.200" opacity=".8"/>
</g>
<text x="24.500" y="119.300" font-family="Liberation Sans" font-size="10.800" font-weight="bold" fill="#3a8c3a" opacity=".8" textLength="53" lengthAdjust="spacingAndGlyphs">GISmap.by</text>
<!-- chrome: home -->
<path d="M26 37.2 L37.3 26.4 L48.6 37.2 M29.6 35 V47.4 H45 V35" fill="none" stroke="#505050" stroke-width="2.5" stroke-linejoin="round" stroke-linecap="round"/>
<!-- back arrow -->
<path d="M111 37 H92.5 M101 27.5 L91.5 37 L101 46.5" fill="none" stroke="#505050" stroke-width="2.5" stroke-linecap="butt" stroke-linejoin="miter"/>
<!-- forward arrow -->
<path d="M155 37 H173.5 M165 27.5 L174.5 37 L165 46.5" fill="none" stroke="#b0b0b0" stroke-width="2.5"/>
<!-- reload -->
<path d="M236.5 31.2 A9.6 9.6 0 1 0 238.6 41" fill="none" stroke="#505050" stroke-width="2.6"/>
<path d="M240.3 27.3 V36.3 H231.3 Z" fill="#505050"/>
<!-- info circle in omnibox -->
<circle cx="291" cy="36.2" r="11" fill="none" stroke="#5a5a5a" stroke-width="2.1"/>
<rect x="289.9" y="34.4" width="2.2" height="8" fill="#5a5a5a"/>
<rect x="289.9" y="29.8" width="2.2" height="2.4" fill="#5a5a5a"/>
<!-- star -->
<path d="M1143.0 26.3 L1145.6 33.3 L1153.1 33.6 L1147.2 38.3 L1149.2 45.5 L1143.0 41.3 L1136.8 45.5 L1138.8 38.3 L1132.9 33.6 L1140.4 33.3 Z" fill="none" stroke="#505050" stroke-width="2.2" stroke-linejoin="miter"/>
<!-- download -->
<path d="M1192 25.3 H1200 V33.2 H1205.4 L1196 42.4 L1186.6 33.2 H1192 Z" fill="#505050"/>
<rect x="1186.6" y="45.4" width="18.8" height="2.8" fill="#505050"/>
<!-- menu dots -->
<circle cx="1249.8" cy="28.8" r="2.7" fill="#505050"/>
<circle cx="1249.8" cy="36.9" r="2.7" fill="#505050"/>
<circle cx="1249.8" cy="45" r="2.7" fill="#505050"/>
<!-- help info-circle -->
<circle cx="1074" cy="105.8" r="8.3" fill="#fff"/>
<path d="M1071.6 103.6 H1075.4 V109.4 H1076.8 V111 H1071.4 V109.4 H1072.8 V105.2 H1071.6 Z M1072.7 100.2 H1075.4 V102.6 H1072.7 Z" fill="#444"/>
<!-- user icon -->
<circle cx="1233" cy="106.3" r="9.5" fill="#fff"/>
<circle cx="1233" cy="103.3" r="3.6" fill="#565656"/>
<path d="M1226 111.5 C1227.5 108.6 1230.3 108 1233 108 C1235.7 108 1238.5 108.6 1240 111.5 C1238.3 113.4 1235.8 114.4 1233 114.4 C1230.2 114.4 1227.700 113.4 1226 111.5 Z" fill="#565656"/>
<!-- panel chevron -->
<path d="M383.6 158.5 L375.6 165.9 L383.6 173.3" fill="none" stroke="#fff" stroke-width="3.6"/>
<!-- select caret -->
<path d="M357.5 280.8 H366.3 L361.9 285.5 Z" fill="#ddd"/>
<!-- strip: th-list -->
<g fill="#fff">
<rect x="13.1" y="155" width="7.2" height="5.8" rx="1"/><rect x="22.8" y="155" width="17" height="5.8" rx="1"/>
<rect x="13.1" y="162.2" width="7.2" height="5.8" rx="1"/><rect x="22.8" y="162.2" width="17" height="5.8" rx="1"/>
<rect x="13.1" y="169.4" width="7.2" height="5.8" rx="1"/><rect x="22.8" y="169.4" width="17" height="5.8" rx="1"/>
</g>
<!-- strip: info-circle active -->
<circle cx="26.8" cy="220.7" r="10.3" fill="#333"/>
<path d="M23.8 218.2 H28.6 V225.2 H30.2 V227.2 H23.6 V225.2 H25.2 V220.2 H23.8 Z M25.2 213.8 H28.6 V216.8 H25.2 Z" fill="#fff"/>
<!-- bookmark -->
<path d="M17.2 263.4 Q17.2 261.9 18.7 261.9 H34.4 Q35.9 261.9 35.9 263.4 V283.9 L26.55 277.4 L17.2 283.9 Z" fill="#fff"/>
<!-- search -->
<circle cx="24.7" cy="326" r="8" fill="none" stroke="#fff" stroke-width="3.4"/>
<path d="M30.6 332 L37.4 338.2" stroke="#fff" stroke-width="3.8" stroke-linecap="round"/>
<!-- paint brush -->
<path d="M39.3 366.5 C40.6 367.6 39.8 370.2 38.6 372.4 C36.6 376.2 33.6 380.6 31.4 382.8 C30.2 384 28.6 383.8 27.4 382.8 L24.6 380.2 C23.5 379.2 23.4 377.6 24.4 376.3 C26.6 373.3 31 369.2 35 366.9 C36.8 365.8 38.4 365.7 39.3 366.5 Z" fill="#fff"/>
<path d="M22.6 381.6 L26.6 385.2 C28 388 26 391.6 21.6 392.2 C17.2 392.8 14 391 13 388 C15 388.4 16.4 387.4 16.6 385.6 C17 382.6 20 380.8 22.6 381.6 Z" fill="#fff"/>
<!-- expand arrows -->
<path d="M20 439.800 L33.600 426.200" stroke="#fff" stroke-width="3.6"/>
<path d="M30.200 421.400 H38.600 V429.800 Z M15.400 436.200 V444.600 H23.800 Z" fill="#fff"/>
</svg>

</body>
</html>
